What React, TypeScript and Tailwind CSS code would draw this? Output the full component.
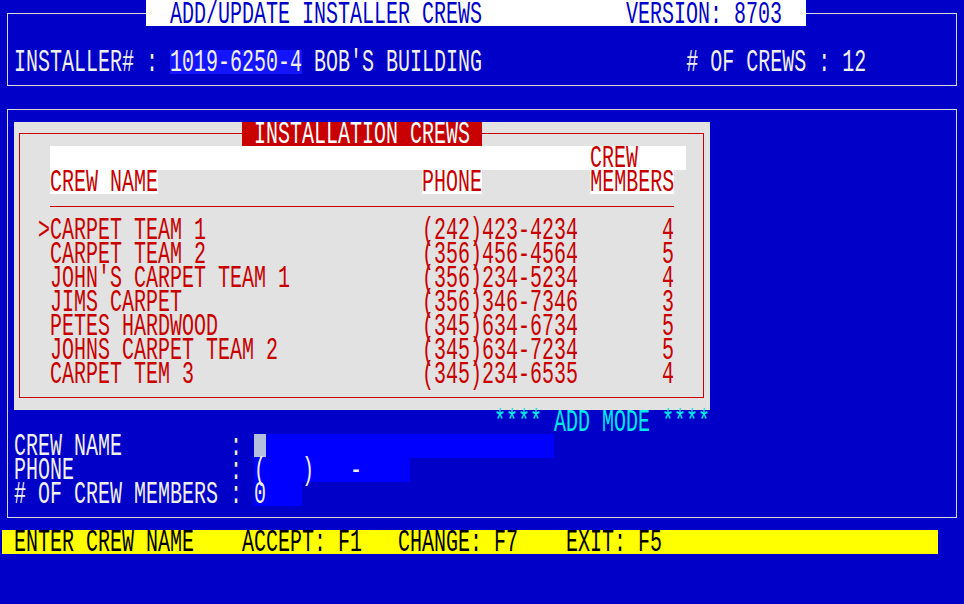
import type { ReactNode } from 'react';

// one text run on the 12x24 character grid; glyphs stretched to the tall DOS look
function T({ children }: { children: ReactNode }) {
    return (
        <span className="inline-block h-6 whitespace-pre scale-y-[1.6] origin-[50%_10px]">
            {children}
        </span>
    );
}

const crews = [
    { name: 'CARPET TEAM 1', phone: '(242)423-4234', members: 4 },
    { name: 'CARPET TEAM 2', phone: '(356)456-4564', members: 5 },
    { name: "JOHN'S CARPET TEAM 1", phone: '(356)234-5234', members: 4 },
    { name: 'JIMS CARPET', phone: '(356)346-7346', members: 3 },
    { name: 'PETES HARDWOOD', phone: '(345)634-6734', members: 5 },
    { name: 'JOHNS CARPET TEAM 2', phone: '(345)634-7234', members: 5 },
    { name: 'CARPET TEM 3', phone: '(345)234-6535', members: 4 },
];

export default function App() {
    return (
        <div className="w-[964px] h-[604px] overflow-hidden bg-[#0000c8] flex flex-col items-start font-['Liberation_Mono',monospace] text-[20px] leading-6 text-[#f0f0f0]">
            {/* header box */}
            <div className="mt-[13px] ml-[7px] w-[950px] h-[73px] border border-[#d8d8d8] flex flex-col items-start">
                <div className="-mt-[14px] ml-[138px] w-[660px] h-[26px] pt-[2px] bg-white text-[#0000c8]">
                    <T>{'  ADD/UPDATE INSTALLER CREWS            VERSION: 8703  '}</T>
                </div>
                <div className="h-6" />
                <div className="flex h-6 ml-[6px]">
                    <T>{'INSTALLER# : '}</T>
                    <span className="h-6 bg-[#1414ff]">
                        <T>1019-6250-4</T>
                    </span>
                    <T>{" BOB'S BUILDING                 # OF CREWS : 12"}</T>
                </div>
            </div>

            {/* main box */}
            <div className="mt-[23px] ml-[7px] w-[950px] h-[409px] border border-[#d8d8d8] flex flex-col items-start">
                <div className="mt-[12px] ml-[6px] w-[696px] h-[288px] pt-[11px] bg-[#e2e2e2] flex flex-col items-start">
                    <div className="ml-[5px] w-[685px] h-[265px] border border-[#c80000] flex flex-col items-start text-[#c80000]">
                        <div className="-mt-[12px] ml-[222px] h-6 bg-[#c80000] text-white">
                            <T>{' INSTALLATION CREWS '}</T>
                        </div>
                        <div className="ml-[30px] w-[636px] h-6 bg-white">
                            <T>{' '.repeat(45) + 'CREW'}</T>
                        </div>
                        <div className="flex h-6 ml-[30px]">
                            <span className="h-6 bg-white">
                                <T>CREW NAME</T>
                            </span>
                            <T>{' '.repeat(22)}</T>
                            <span className="h-6 bg-white">
                                <T>PHONE</T>
                            </span>
                            <T>{' '.repeat(9)}</T>
                            <span className="h-6 bg-white">
                                <T>MEMBERS</T>
                            </span>
                        </div>
                        <div className="ml-[30px] h-6 pt-[12px]">
                            <div className="w-[624px] h-px bg-[#c80000]" />
                        </div>
                        {crews.map((c, i) => (
                            <div key={c.name} className="flex h-6 ml-[18px]">
                                <T>{(i === 0 ? '>' : ' ') + c.name.padEnd(31) + c.phone + '       ' + c.members}</T>
                            </div>
                        ))}
                    </div>
                </div>

                <div className="ml-[486px] h-6 text-[#00e8e8]">
                    <T>**** ADD MODE ****</T>
                </div>
                <div className="flex h-6 ml-[6px]">
                    <T>{'CREW NAME         : '}</T>
                    <span className="w-[300px] h-6 bg-[#0000ff]">
                        <span className="block w-[12px] h-[23px] bg-[#b4bedf]" />
                    </span>
                </div>
                <div className="flex h-6 ml-[6px]">
                    <T>{'PHONE             : '}</T>
                    <span className="w-[156px] h-6 bg-[#0000ff]">
                        <T>{'(   )   -'}</T>
                    </span>
                </div>
                <div className="flex h-6 ml-[6px]">
                    <T>{'# OF CREW MEMBERS : '}</T>
                    <span className="w-[48px] h-6 bg-[#0000ff]">
                        <T>0</T>
                    </span>
                </div>
            </div>

            {/* key help line */}
            <div className="mt-[12px] ml-[2px] w-[936px] h-6 bg-[#ffff00] text-black">
                <T>{' ENTER CREW NAME    ACCEPT: F1   CHANGE: F7    EXIT: F5'}</T>
            </div>
        </div>
    );
}
